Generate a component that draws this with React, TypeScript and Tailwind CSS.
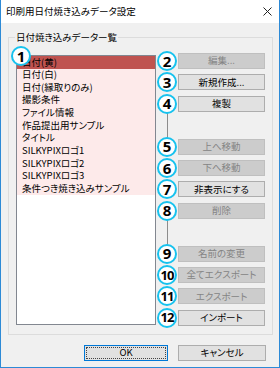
import React from "react";

type Row = { n?: number; label?: string; disabled?: boolean; connector?: boolean };

const rows: Row[] = [
  { n: 2, label: "編集...", disabled: true },
  { n: 3, label: "新規作成..." },
  { n: 4, label: "複製" },
  { connector: true },
  { n: 5, label: "上へ移動", disabled: true },
  { n: 6, label: "下へ移動", disabled: true },
  { n: 7, label: "非表示にする" },
  { n: 8, label: "削除", disabled: true },
  { connector: true },
  { n: 9, label: "名前の変更", disabled: true },
  { n: 10, label: "全てエクスポート", disabled: true },
  { n: 11, label: "エクスポート", disabled: true },
  { n: 12, label: "インポート" },
];

const items = [
  "日付(黄)",
  "日付(白)",
  "日付(縁取りのみ)",
  "撮影条件",
  "ファイル情報",
  "作品提出用サンプル",
  "タイトル",
  "SILKYPIXロゴ1",
  "SILKYPIXロゴ2",
  "SILKYPIXロゴ3",
  "条件つき焼き込みサンプル",
];

function Badge({ n }: { n: number }) {
  return (
    <div className="w-[20px] h-[20px] rounded-full bg-white border-2 border-[#17c2ee] flex items-center justify-center shrink-0 relative z-10">
      <span
        className={
          "font-['Open_Sans',sans-serif] font-bold text-black leading-none " +
          (n >= 10 ? "text-[13px] tracking-[-1px]" : "text-[15px]")
        }
      >
        {n}
      </span>
    </div>
  );
}

export default function App() {
  return (
    <div className="w-[280px] h-[368px] flex flex-col border-x border-b border-[#2d8ad6] bg-[#f0f0f0] font-['Noto_Sans_CJK_JP',sans-serif] [font-feature-settings:'palt'] text-black">
      {/* title bar */}
      <div className="h-[23px] bg-white flex items-center justify-between pl-[5px] pr-[7px]">
        <span className="text-[9.5px] leading-none">印刷用日付焼き込みデータ設定</span>
        <svg width="9" height="9" viewBox="0 0 9 9">
          <path d="M0.5 0.5 L8.5 8.5 M8.5 0.5 L0.5 8.5" stroke="#222" strokeWidth="1" />
        </svg>
      </div>

      {/* group box */}
      <div className="relative mt-[14px] ml-[7px] w-[265px] h-[298px] border border-[#dcdcdc]">
        <span className="absolute left-[6px] top-[-7px] px-[1px] bg-[#f0f0f0] text-[9.5px] leading-[12px]">
          日付焼き込みデーター覧
        </span>
        <div className="flex items-start pl-[7px]">
          {/* list */}
          <div className="relative mt-[17px] w-[140px] h-[270px] border border-[#828790] bg-white">
            <div className="absolute left-[-6px] top-[-10px]">
              <Badge n={1} />
            </div>
            {items.map((t, i) => (
              <div
                key={t}
                className={
                  "h-[12.64px] flex items-center pl-[5px] text-[9.5px] leading-none whitespace-nowrap " +
                  (i === 0 ? "bg-[#bf5350]" : "bg-[#fdeaea]")
                }
              >
                {t}
              </div>
            ))}
          </div>
          {/* buttons */}
          <div className="mt-[12.3px] ml-[1px] flex flex-col">
            {rows.map((r, i) =>
              r.connector ? (
                <div key={"c" + i} className="h-[21.42px] w-[20px] flex justify-center">
                  <div className="w-px -my-[2px] bg-[#8c8c8c]" />
                </div>
              ) : (
                <div key={r.n} className="h-[21.42px] flex items-center">
                  <Badge n={r.n!} />
                  <div
                    className={
                      "ml-[1px] w-[87px] h-[16px] border flex items-center justify-center text-[9.5px] leading-none " +
                      (r.disabled
                        ? "bg-[#cccccc] border-[#bfbfbf] text-[#848484]"
                        : "bg-[#e1e1e1] border-[#adadad] text-black")
                    }
                  >
                    {r.label}
                  </div>
                </div>
              )
            )}
          </div>
        </div>
      </div>

      {/* bottom buttons */}
      <div className="mt-[10px] flex justify-end gap-[10px] pr-[13px]">
        <div className="relative w-[84px] h-[16px] border border-[#0078d7] bg-[#e1e1e1] flex items-center justify-center text-[9.5px] leading-none">
          <div className="absolute inset-[1px] border border-dotted border-[#444]" />
          OK
        </div>
        <div className="w-[88px] h-[16px] border border-[#adadad] bg-[#e1e1e1] flex items-center justify-center text-[9.5px] leading-none">
          キャンセル
        </div>
      </div>
    </div>
  );
}
